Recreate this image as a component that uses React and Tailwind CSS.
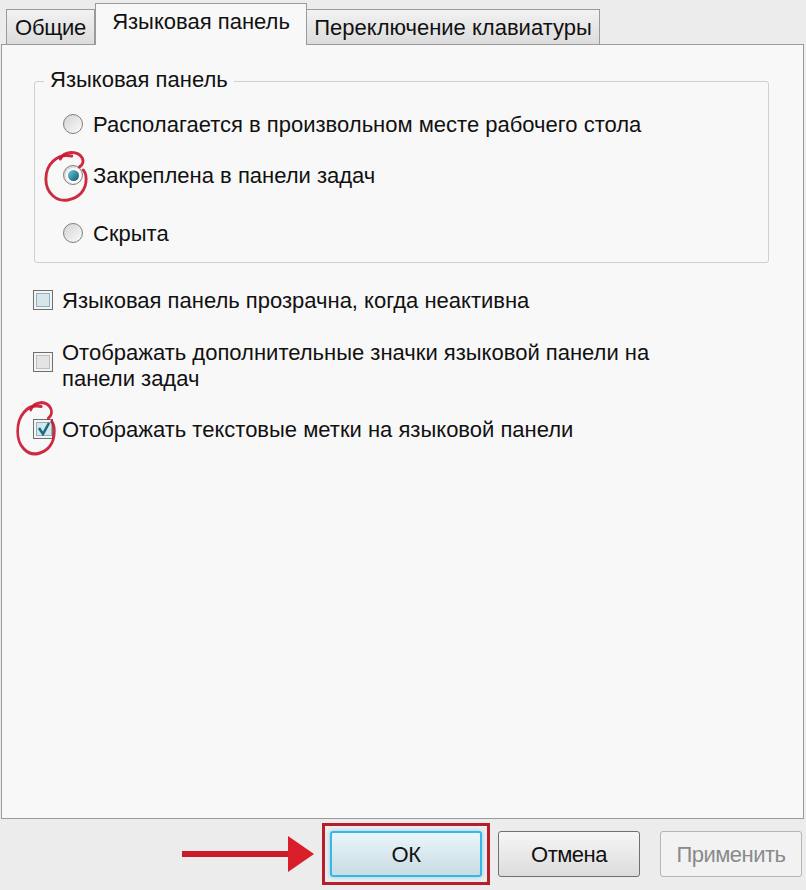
import React from 'react';

const FONT = { fontFamily: '"Liberation Sans", Arial, sans-serif' };

function Radio({ checked }) {
  return (
    <span className="w-[20px] h-[20px] rounded-full border border-[#7e7e7e] bg-gradient-to-br from-[#d4d4d4] to-[#fbfbfb] shrink-0 flex items-center justify-center">
      {checked && <span className="w-[11px] h-[11px] rounded-full bg-gradient-to-br from-[#6fd0e0] to-[#0c566e] ring-2 ring-[#ffffff]" />}
    </span>
  );
}

function Check({ checked, faint }) {
  return (
    <span className="w-[20px] h-[20px] border border-[#6f6f6f] bg-[#f4f4f4] p-[2px] shrink-0 flex">
      <span className={`flex-1 border ${faint ? 'border-[#8fb2bd] bg-[#d6e7ec]' : 'border-[#c0c0c0] bg-[#e4e4e4]'} flex items-center justify-center`}>
        {checked && (
          <svg width="14" height="14" viewBox="0 0 14 14">
            <path d="M2 6 L6 12 L12 1" fill="none" stroke="#1b6a86" strokeWidth="2.6" />
          </svg>
        )}
      </span>
    </span>
  );
}

// hand-drawn red ring around an option
function Ringed({ children, w, h, dx, dy }) {
  return (
    <span className="relative shrink-0 flex">
      {children}
      <svg className="pointer-events-none absolute z-20 max-w-none overflow-visible" style={{ left: dx, top: dy }} width={w} height={h} viewBox="0 0 48 56" preserveAspectRatio="none">
        <path d="M18 10 C22 2 36 1 41 9 C43 13 41 16 38 18" fill="none" stroke="#c8142c" strokeWidth="3" strokeLinecap="round" opacity="0.9" />
        <path d="M30 7 C14 4 3 16 3 30 C3 44 14 53 26 51 C37 49 45 42 45 30 C45 26 44 23 42 21" fill="none" stroke="#c8142c" strokeWidth="3" strokeLinecap="round" opacity="0.9" />
      </svg>
    </span>
  );
}

export default function App() {
  return (
    <div className="w-[806px] h-[890px] bg-[#ececec] text-[#111] relative overflow-hidden" style={FONT}>
      {/* tabs */}
      <div className="flex items-end h-[44px] pl-[6px] text-[22px]">
        <div className="h-[35px] w-[89px] border border-b-0 border-[#9a9a9a] bg-gradient-to-b from-[#f2f2f2] to-[#dcdcdc] flex items-center justify-center tracking-[-0.3px]">Общие</div>
        <div className="h-[42px] w-[212px] border border-b-0 border-[#9a9a9a] bg-[#f8f8f8] flex items-center justify-center relative top-[1px] z-10 pb-[6px]">Языковая панель</div>
        <div className="h-[35px] w-[293px] border border-b-0 border-l-0 border-[#9a9a9a] bg-gradient-to-b from-[#f2f2f2] to-[#dcdcdc] flex items-center justify-center">Переключение клавиатуры</div>
      </div>

      {/* panel */}
      <div className="ml-[1px] w-[803px] h-[775px] border border-[#9a9a9a] bg-[#f8f8f8] pt-[36px] pl-[32px] pr-[34px] text-[22px]">
        <div className="relative border border-[#cfcfcf] rounded-[3px] h-[182px] pt-[30px] pl-[28px]">
          <span className="absolute -top-[14px] left-[9px] px-[6px] bg-[#f8f8f8] leading-[24px]">Языковая панель</span>
          <div className="flex flex-col gap-[27px]">
            <label className="flex items-center gap-[10px] h-[24px]"><Radio />Располагается в произвольном месте рабочего стола</label>
            <label className="flex items-center gap-[10px] h-[24px]">
              <Ringed w={46} h={56} dx={-20} dy={-16}><Radio checked /></Ringed>
              Закреплена в панели задач
            </label>
            <label className="flex items-center gap-[10px] h-[24px] mt-[7px]"><Radio />Скрыта</label>
          </div>
        </div>

        <div className="-ml-[1px] mt-[25px] flex flex-col">
          <label className="flex items-center gap-[9px] h-[24px]"><Check faint />Языковая панель прозрачна, когда неактивна</label>
          <div className="flex items-start gap-[9px] mt-[28px] leading-[26px]">
            <span className="mt-[12px]"><Check /></span>
            <span>Отображать дополнительные значки языковой панели на<br />панели задач</span>
          </div>
          <label className="flex items-center gap-[9px] h-[24px] mt-[25px]">
            <Ringed w={42} h={60} dx={-18} dy={-20}><Check checked faint /></Ringed>
            Отображать текстовые метки на языковой панели
          </label>
        </div>
      </div>

      {/* bottom buttons */}
      <div className="flex items-center h-[70px] text-[22px]">
        <div className="w-[182px]" />
        <div className="flex items-center">
          <div className="w-[106px] h-[6px] bg-[#c81d28]" />
          <svg width="26" height="36" viewBox="0 0 26 36"><path d="M0 0 L26 18 L0 36 Z" fill="#d81e28" /></svg>
        </div>
        <div className="ml-[8px] border-[3px] border-[#b81d2a] p-[5px]">
          <button className="w-[152px] h-[46px] rounded-[3px] border-2 border-[#37b7e6] bg-gradient-to-b from-[#eaf6fb] to-[#c9dbe3] shadow-[0_0_4px_#7fd4f2] text-[#111] tracking-[-0.5px]">ОК</button>
        </div>
        <button className="ml-[8px] w-[142px] h-[46px] rounded-[3px] border border-[#707070] bg-gradient-to-b from-[#f6f6f6] to-[#dcdcdc] text-[#111] tracking-[-0.5px]">Отмена</button>
        <button className="ml-[20px] w-[142px] h-[46px] rounded-[3px] border border-[#b5b5b5] bg-[#f2f2f2] text-[#8a8a8a] tracking-[-0.5px]">Применить</button>
      </div>
    </div>
  );
}
